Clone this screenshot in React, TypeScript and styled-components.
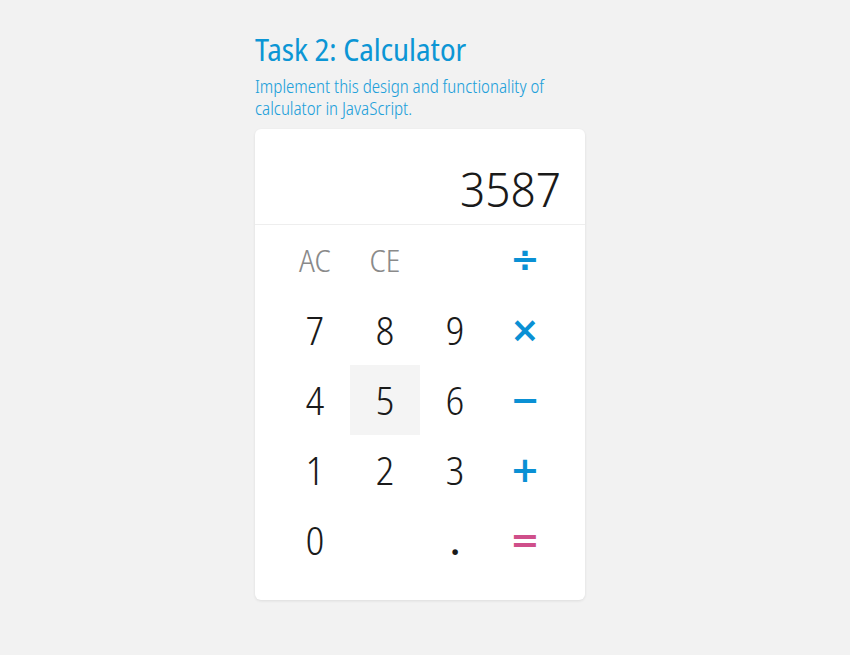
import React, { useState } from "react";
import styled, { createGlobalStyle } from "styled-components";

const FONT = '"Noto Sans Display", "Noto Sans", "Liberation Sans", sans-serif';

const Global = createGlobalStyle`
  html, body { margin: 0; padding: 0; background: #f2f2f2; }
  body { font-family: ${FONT}; }
`;

const Page = styled.div`
  display: flex;
  padding: 32px 0 40px 255px;
  min-height: 655px;
  box-sizing: border-box;
`;

const Column = styled.div`
  width: 330px;
  display: flex;
  flex-direction: column;
`;

const Title = styled.h1`
  margin: 0;
  font-family: ${FONT};
  font-weight: 450;
  font-stretch: 83%;
  font-size: 30px;
  line-height: 36px;
  color: #0c96d5;
`;

const Subtitle = styled.p`
  margin: 7px 0 10px;
  font-family: ${FONT};
  font-weight: 300;
  font-stretch: 78%;
  font-size: 17.6px;
  line-height: 22px;
  color: #22a0da;
`;

const Card = styled.div`
  background: #fff;
  border-radius: 6px;
  box-shadow: 0 1px 3px rgba(0, 0, 0, 0.09);
  padding-bottom: 25px;
`;

const Display = styled.div`
  height: 96px;
  box-sizing: border-box;
  border-bottom: 1px solid #eeeeee;
  padding: 36px 24px 0;
  text-align: right;
  font-family: ${FONT};
  font-weight: 300;
  font-stretch: 88%;
  font-size: 47px;
  line-height: 48px;
  color: #1a1a1a;
  white-space: nowrap;
  overflow: hidden;
`;

const Keypad = styled.div`
  display: grid;
  grid-template-columns: repeat(4, 70px);
  grid-auto-rows: 70px;
  padding: 0 25px;
`;

type Kind = "digit" | "dot" | "clear" | "op" | "eq" | "blank";

const isOp = (k: Kind) => k === "op" || k === "eq";

const Key = styled.button<{ $kind: Kind; $active?: boolean }>`
  border: none;
  margin: 0;
  padding: 0;
  background: ${(p) => (p.$active ? "#f4f4f4" : "transparent")};
  display: flex;
  align-items: center;
  justify-content: center;
  cursor: ${(p) => (p.$kind === "blank" ? "default" : "pointer")};
  font-family: ${(p) => (isOp(p.$kind) ? '"DejaVu Sans", sans-serif' : FONT)};
  font-weight: ${(p) => (isOp(p.$kind) ? 700 : p.$kind === "dot" ? 600 : 300)};
  font-stretch: ${(p) => (isOp(p.$kind) ? "100%" : "84%")};
  font-size: ${(p) =>
    p.$kind === "clear" ? "31px" : isOp(p.$kind) ? "35px" : "38px"};
  color: ${(p) =>
    p.$kind === "clear"
      ? "#8a8a8a"
      : p.$kind === "op"
      ? "#0a90d4"
      : p.$kind === "eq"
      ? "#cf4f8a"
      : "#1a1a1a"};
  outline: none;
  &:hover {
    background: ${(p) => (p.$kind === "blank" ? "transparent" : "#f4f4f4")};
  }
`;

const keys: { label: string; kind: Kind }[] = [
  { label: "AC", kind: "clear" },
  { label: "CE", kind: "clear" },
  { label: "", kind: "blank" },
  { label: "÷", kind: "op" },
  { label: "7", kind: "digit" },
  { label: "8", kind: "digit" },
  { label: "9", kind: "digit" },
  { label: "×", kind: "op" },
  { label: "4", kind: "digit" },
  { label: "5", kind: "digit" },
  { label: "6", kind: "digit" },
  { label: "−", kind: "op" },
  { label: "1", kind: "digit" },
  { label: "2", kind: "digit" },
  { label: "3", kind: "digit" },
  { label: "+", kind: "op" },
  { label: "0", kind: "digit" },
  { label: "", kind: "blank" },
  { label: ".", kind: "dot" },
  { label: "=", kind: "eq" },
];

function compute(a: number, b: number, op: string): number {
  switch (op) {
    case "÷":
      return b === 0 ? NaN : a / b;
    case "×":
      return a * b;
    case "−":
      return a - b;
    case "+":
      return a + b;
    default:
      return b;
  }
}

export default function App() {
  const [display, setDisplay] = useState("3587");
  const [acc, setAcc] = useState<number | null>(null);
  const [op, setOp] = useState<string | null>(null);
  const [fresh, setFresh] = useState(false);

  const press = (label: string, kind: Kind) => {
    if (kind === "blank") return;
    if (kind === "digit" || kind === "dot") {
      if (fresh) {
        setDisplay(label === "." ? "0." : label);
        setFresh(false);
        return;
      }
      if (label === "." && display.includes(".")) return;
      setDisplay(display === "0" && label !== "." ? label : display + label);
      return;
    }
    if (label === "AC") {
      setDisplay("0");
      setAcc(null);
      setOp(null);
      setFresh(false);
      return;
    }
    if (label === "CE") {
      setDisplay("0");
      return;
    }
    const cur = parseFloat(display);
    if (kind === "eq") {
      if (acc !== null && op) {
        const r = compute(acc, cur, op);
        setDisplay(String(parseFloat(r.toPrecision(12))));
        setAcc(null);
        setOp(null);
        setFresh(true);
      }
      return;
    }
    if (acc !== null && op && !fresh) {
      const r = compute(acc, cur, op);
      setAcc(r);
      setDisplay(String(parseFloat(r.toPrecision(12))));
    } else {
      setAcc(cur);
    }
    setOp(label);
    setFresh(true);
  };

  return (
    <>
      <Global />
      <Page>
        <Column>
          <Title>Task 2: Calculator</Title>
          <Subtitle>
            Implement this design and functionality of
            <br />
            calculator in JavaScript.
          </Subtitle>
          <Card>
            <Display>{display}</Display>
            <Keypad>
              {keys.map((k, i) => (
                <Key
                  key={i}
                  $kind={k.kind}
                  $active={k.label === "5"}
                  onClick={() => press(k.label, k.kind)}
                >
                  {k.label}
                </Key>
              ))}
            </Keypad>
          </Card>
        </Column>
      </Page>
    </>
  );
}
